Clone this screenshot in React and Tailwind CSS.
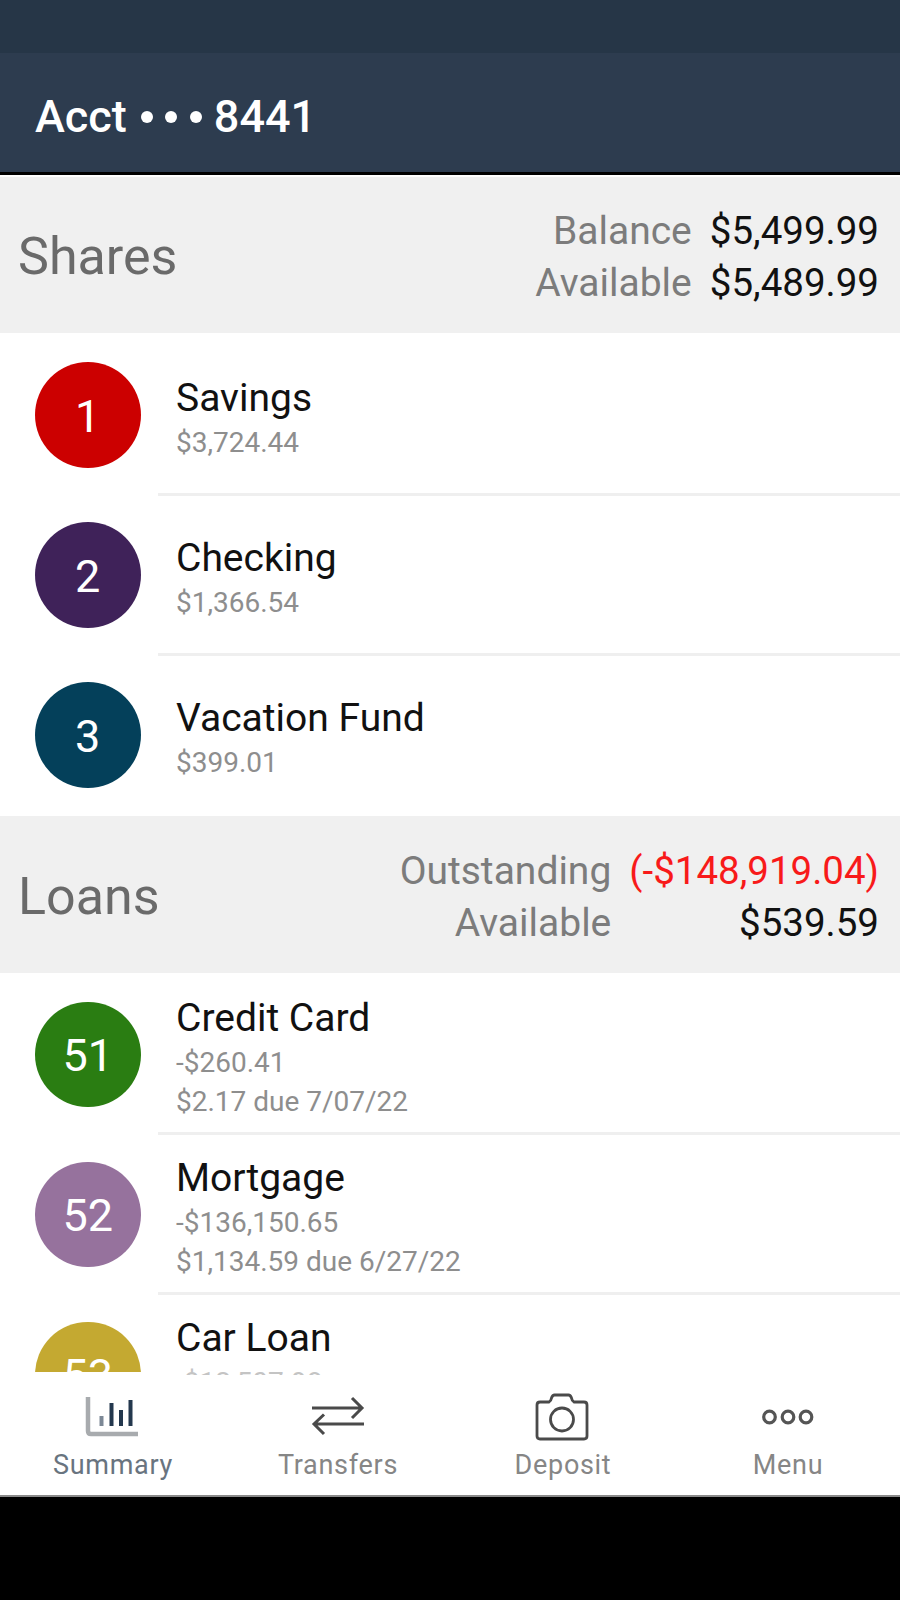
const shares = [
  { id: 1, name: 'Savings', lines: ['$3,724.44'], color: 'bg-[#cc0000]' },
  { id: 2, name: 'Checking', lines: ['$1,366.54'], color: 'bg-[#3f2259]' },
  { id: 3, name: 'Vacation Fund', lines: ['$399.01'], color: 'bg-[#04405a]' },
];

const loans = [
  { id: 51, name: 'Credit Card', lines: ['-$260.41', '$2.17 due 7/07/22'], color: 'bg-[#2a7d12]' },
  { id: 52, name: 'Mortgage', lines: ['-$136,150.65', '$1,134.59 due 6/27/22'], color: 'bg-[#96729d]' },
  { id: 53, name: 'Car Loan', lines: ['-$12,507.98', '\u00a0'], color: 'bg-[#c4a931]', clipped: true },
];

function SectionHeader({ title, rows, height }) {
  return (
    <div className={`flex shrink-0 items-center justify-between bg-[#f0f0f0] pr-[21px] pl-[18px] ${height}`}>
      <h2 className="text-[52px] leading-[60px] text-[#6a6a6a]">{title}</h2>
      <dl className="grid grid-cols-[auto_auto] gap-x-[18px] text-right text-[39px] leading-[52.5px]">
        {rows.map(([label, value, tone]) => (
          <div key={label} className="contents">
            <dt className="text-[#7c7c7c]">{label}</dt>
            <dd className={`text-[38.5px] ${tone}`}>{value}</dd>
          </div>
        ))}
      </dl>
    </div>
  );
}

function AccountRow({ item, last }) {
  return (
    <li className="flex h-[160px] shrink-0 pl-[35px]">
      <div className={`shrink-0 overflow-hidden pt-[26.5px] ${item.clipped ? 'h-[76.5px]' : 'h-[157px]'}`}>
        <div className={`flex size-[105.5px] items-center justify-center rounded-full pt-[3px] text-[45px] text-white ${item.color}`}>
          {item.id}
        </div>
      </div>
      <div className={`ml-[17.5px] flex flex-1 flex-col justify-center border-b-[3px] pt-[6px] pl-[18px] ${last ? 'border-transparent' : 'border-[#efefef]'}`}>
        <p className="text-[39px] leading-[50px] text-[#111]">{item.name}</p>
        {item.lines.map((line) => (
          <p key={line} className={`text-[28px] leading-[39px] ${item.clipped ? 'text-[#c4c4c4]' : 'text-[#8e8e8e]'}`}>{line}</p>
        ))}
      </div>
    </li>
  );
}

function SummaryIcon() {
  return (
    <svg width="54" height="48" viewBox="0 0 54 48" fill="none">
      <path d="M3 4v34q0 3 3 3h47" stroke="#a8abae" strokeWidth="4.500" />
      <path d="M16.500 23v10" stroke="#7c8896" strokeWidth="4" />
      <path d="M26.500 10v23M36 17v16M45.500 7v26" stroke="#24384e" strokeWidth="4" />
    </svg>
  );
}

function TransfersIcon() {
  return (
    <svg width="54" height="48" viewBox="0 0 54 48" fill="none" stroke="#4a4a4a" strokeWidth="3">
      <path d="M1 15h50M41 5l10 10-10 10" />
      <path d="M53 31H3M13 21.500L3 31l10 10" />
    </svg>
  );
}

function DepositIcon() {
  return (
    <svg width="54" height="48" viewBox="0 0 54 48" fill="none" stroke="#4a4a4a" strokeWidth="2.800">
      <path d="M5 9h9q2-1 2.500-4 1-3 3-3h14q2 0 3 3 .5 3 2.500 4h10q3 0 3 3v31q0 3-3 3H5q-3 0-3-3V12q0-3 3-3Z" />
      <circle cx="27" cy="26.500" r="11.500" />
    </svg>
  );
}

function MenuIcon() {
  return (
    <svg width="54" height="48" viewBox="0 0 54 48" fill="none" stroke="#555" strokeWidth="3.200">
      <circle cx="8.500" cy="24" r="5.800" />
      <circle cx="27" cy="24" r="5.800" />
      <circle cx="45" cy="24" r="5.800" />
    </svg>
  );
}

const tabs = [
  { label: 'Summary', Icon: SummaryIcon, tone: 'text-[#69747f]', shift: '-ml-[2px]' },
  { label: 'Transfers', Icon: TransfersIcon, tone: 'text-[#868686]', shift: '' },
  { label: 'Deposit', Icon: DepositIcon, tone: 'text-[#868686]', shift: '-ml-[2px]' },
  { label: 'Menu', Icon: MenuIcon, tone: 'text-[#868686]', shift: '' },
];

export default function App() {
  return (
    <div className="flex h-[1600px] w-[900px] flex-col overflow-hidden bg-white font-['Roboto',sans-serif]">
      <div className="h-[53px] shrink-0 bg-[#263647]" />
      <header className="flex h-[122px] shrink-0 items-center border-b-[3px] border-black bg-[#2d3c4f] pt-[8px] pl-[35px]">
        <h1 className="flex items-center text-[45px] leading-[52px] font-medium text-white">
          <span>Acct</span>
          <span className="mr-[12px] ml-[14px] flex gap-[12.5px]">
            <i className="size-[12px] rounded-full bg-white" />
            <i className="size-[12px] rounded-full bg-white" />
            <i className="size-[12px] rounded-full bg-white" />
          </span>
          <span>8441</span>
        </h1>
      </header>

      <main className="flex h-[1200px] shrink-0 flex-col overflow-hidden border-t-2 border-white">
        <SectionHeader
          title="Shares"
          height="h-[156px] pt-[4px]"
          rows={[
            ['Balance', '$5,499.99', 'text-[#111]'],
            ['Available', '$5,489.99', 'text-[#111]'],
          ]}
        />
        <ul className="shrink-0 pt-[2.5px]">
          {shares.map((item, i) => (
            <AccountRow key={item.id} item={item} last={i === shares.length - 1} />
          ))}
        </ul>
        <SectionHeader
          title="Loans"
          height="h-[157px] pt-[6px]"
          rows={[
            ['Outstanding', '(-$148,919.04)', 'text-[#f81a1a]'],
            ['Available', '$539.59', 'text-[#111]'],
          ]}
        />
        <ul className="shrink-0 pt-[2.5px]">
          {loans.map((item) => (
            <AccountRow key={item.id} item={item} />
          ))}
        </ul>
      </main>

      <nav className="grid h-[122px] shrink-0 grid-cols-4 border-b-2 border-[#8a8a8a] bg-white">
        {tabs.map(({ label, Icon, tone, shift }) => (
          <div key={label} className="flex flex-col items-center pt-[18px]">
            <div className={shift}>
              <Icon />
            </div>
            <span className={`mt-[8px] ml-[1px] text-[27px] leading-[32px] tracking-[0.7px] ${tone}`}>{label}</span>
          </div>
        ))}
      </nav>
      <div className="flex-1 bg-black" />
    </div>
  );
}
